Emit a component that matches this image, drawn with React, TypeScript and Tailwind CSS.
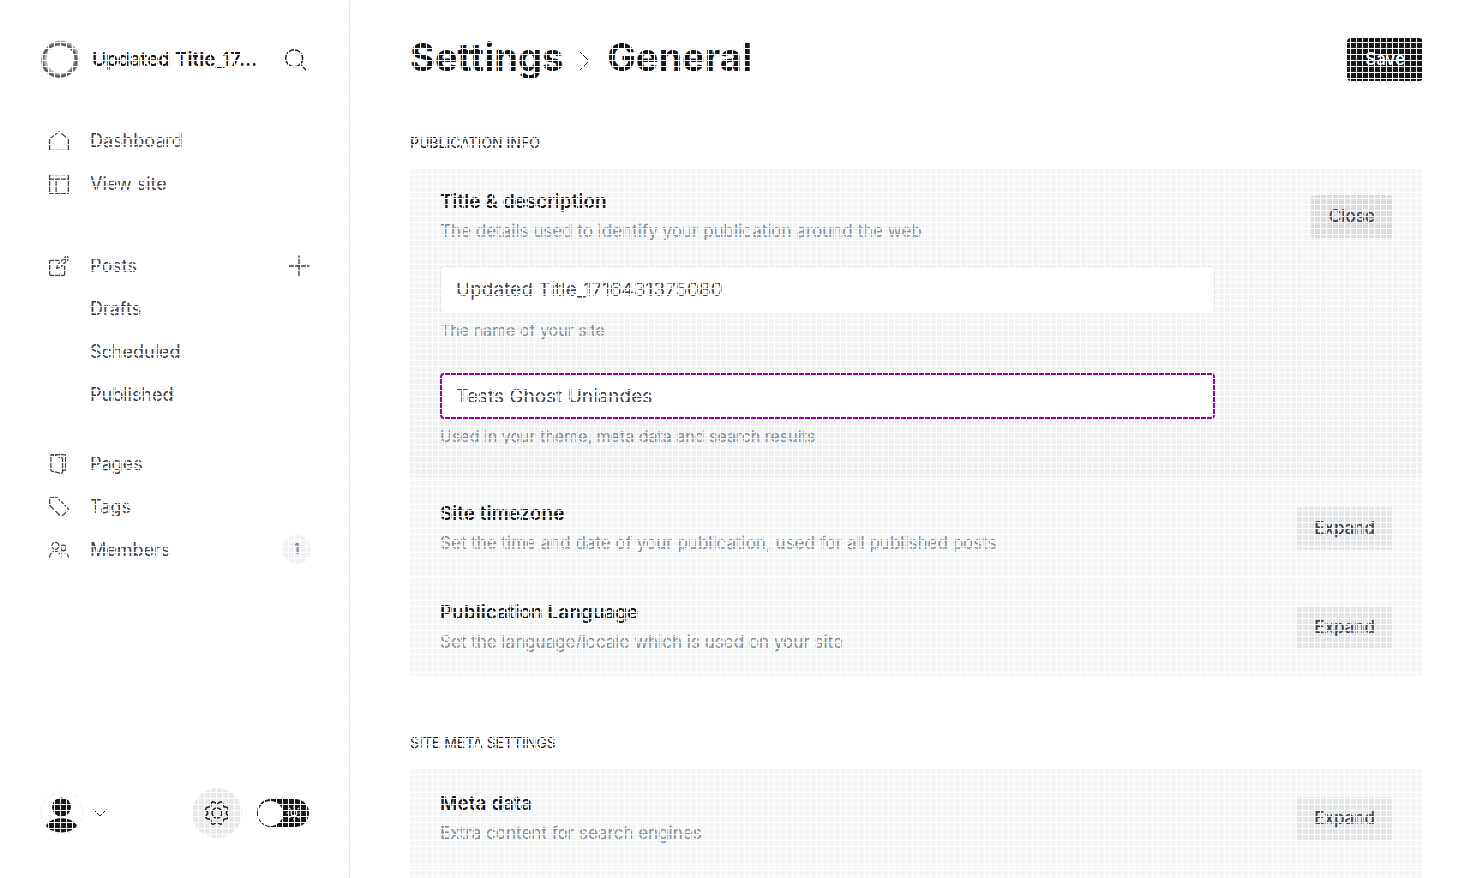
import React from "react";

type IconProps = { children: React.ReactNode; className?: string };

function Icon({ children, className = "size-5" }: IconProps) {
  return (
    <svg
      viewBox="0 0 24 24"
      fill="none"
      stroke="currentColor"
      strokeWidth="1.5"
      strokeLinecap="round"
      strokeLinejoin="round"
      aria-hidden="true"
      className={"shrink-0 overflow-visible " + className}
    >
      {children}
    </svg>
  );
}

const icons = {
  home: <path d="M.75 9.5 12 .75 23.25 9.5V23.25H.75z" />,
  site: <path d="M.75.75h22.5v22.5H.75zM.75 6h22.5M8.5 6v17.25" />,
  posts: (
    <path d="M12 5.25H2.25a1.5 1.5 0 0 0-1.5 1.5v15a1.5 1.5 0 0 0 1.5 1.5h15a1.5 1.5 0 0 0 1.5-1.5V12M22.6 1.4a2.2 2.2 0 0 0-3.1 0l-9 9-1.4 4.5 4.5-1.4 9-9a2.2 2.2 0 0 0 0-3.1zM18 3l3 3" />
  ),
  pages: (
    <path d="M3 .75h15.5a1.5 1.5 0 0 1 1.5 1.5V18a1.5 1.5 0 0 1-1.5 1.5h-2M3 .75a1.2 1.2 0 0 0-.75 1.1v17.3a1.5 1.5 0 0 0 1.1 1.45l11 2.6a1.5 1.5 0 0 0 1.9-1.5V6a1.5 1.5 0 0 0-1.1-1.4L3 .75z" />
  ),
  tags: (
    <path d="M.75 2.25a1.5 1.5 0 0 1 1.5-1.5h6.4a3 3 0 0 1 2.1.9L22.8 13.7a1.5 1.5 0 0 1 0 2.1l-7 7a1.5 1.5 0 0 1-2.1 0L1.65 10.75a3 3 0 0 1-.9-2.1z" />
  ),
  members: (
    <path d="M3.5 7a4.2 4.2 0 1 0 8.4 0 4.2 4.2 0 1 0-8.4 0zM14 9.5a3.3 3.3 0 1 0 6.6 0 3.3 3.3 0 1 0-6.6 0zM.75 20.5a6.75 6.75 0 0 1 13.5 0M14.5 15.8a5.7 5.7 0 0 1 8.75 4.7" />
  ),
};

// Closed outline of a cog with eight rounded lobes, in a 24-unit box.
const cogPoints = Array.from({ length: 96 }, (_, i) => {
  const angle = (i / 96) * 2 * Math.PI;
  const radius = 10.6 - 1.4 * Math.cos(8 * angle);
  return `${(12 + radius * Math.cos(angle)).toFixed(2)},${(12 + radius * Math.sin(angle)).toFixed(2)}`;
}).join(" ");

type NavItemProps = { label: string; icon?: React.ReactNode; children?: React.ReactNode };

function NavItem({ label, icon, children }: NavItemProps) {
  return (
    <li className="flex h-[43px] items-center pr-[38px] pl-[49px] text-[#394047]">
      <a href="#" className="flex grow items-center text-[18px]">
        <span className="flex w-[41px]">{icon && <Icon>{icon}</Icon>}</span>
        {label}
      </a>
      {children}
    </li>
  );
}

function Sidebar() {
  return (
    <aside className="flex w-[350px] shrink-0 flex-col border-r border-[#dfe1e3]">
      <header className="flex items-center pt-10 pr-[42px] pl-10">
        <svg viewBox="0 0 40 40" className="size-10 shrink-0" fill="none" aria-hidden="true">
          <ellipse cx="21" cy="19" rx="16.5" ry="16.5" stroke="#b5b5b5" strokeWidth="4" />
          <ellipse cx="19" cy="20" rx="16" ry="17" stroke="#8a8a8a" strokeWidth="3" transform="rotate(35 20 20)" />
          <ellipse cx="19.5" cy="20.5" rx="17" ry="16" stroke="#5a5a5a" strokeWidth="2" />
        </svg>
        <h2 className="ml-3 text-[19px] leading-6 font-semibold whitespace-nowrap text-[#15171a]">
          Updated Title_17...
        </h2>
        <button aria-label="Search" className="ml-auto text-[#15171a]">
          <Icon className="size-[22px]">
            <circle cx="10" cy="10" r="9.25" />
            <path d="m16.5 16.5 6.75 6.75" />
          </Icon>
        </button>
      </header>
      <nav className="mt-[39px] grow">
        <ul>
          <NavItem label="Dashboard" icon={icons.home} />
          <NavItem label="View site" icon={icons.site} />
        </ul>
        <ul className="mt-[39px]">
          <NavItem label="Posts" icon={icons.posts}>
            <button aria-label="New post">
              <Icon className="mr-px size-[22px]">
                <path d="M12 1v22M1 12h22" />
              </Icon>
            </button>
          </NavItem>
          <NavItem label="Drafts" />
          <NavItem label="Scheduled" />
          <NavItem label="Published" />
        </ul>
        <ul className="mt-[26px]">
          <NavItem label="Pages" icon={icons.pages} />
          <NavItem label="Tags" icon={icons.tags} />
          <NavItem label="Members" icon={icons.members}>
            <span className="flex size-[29px] items-center justify-center rounded-full bg-[#eff1f2] text-[15px] font-semibold text-[#7c8b9a]">
              1
            </span>
          </NavItem>
        </ul>
      </nav>
      <footer className="flex items-center pr-10 pb-10 pl-10">
        <button aria-label="Account" className="flex items-center">
          <svg viewBox="0 0 44 44" className="size-11" aria-hidden="true">
            <circle cx="22" cy="22" r="21" fill="#fff" stroke="#e6e9eb" />
            <circle cx="21.5" cy="16" r="9.5" fill="#15171a" />
            <path d="M6 35c4-10.5 27-10.5 31 0-7 8.5-24 8.5-31 0z" fill="#15171a" />
          </svg>
          <svg viewBox="0 0 14 8" className="ml-[9px] h-2 w-[14px]" fill="none" stroke="#15171a" aria-hidden="true">
            <path d="m.5 .5 6.5 6.5 6.5-6.5" />
          </svg>
        </button>
        <a href="#" aria-label="Settings" className="ml-auto flex size-[50px] items-center justify-center rounded-full bg-[#e6e9eb] text-[#15171a]">
          <Icon className="size-6">
            <circle cx="12" cy="12" r="5" />
            <polygon points={cogPoints} />
          </Icon>
        </a>
        <button role="switch" aria-checked="false" aria-label="Night mode" className="ml-[15px] flex h-7 w-[52px] items-center justify-between rounded-full bg-[#15171a] pr-2 pl-px text-white">
          <span className="size-[25px] rounded-full bg-white" />
          <Icon className="size-[14px] stroke-2">
            <circle cx="12" cy="12" r="5" />
            <path d="M12 0v3M12 21v3M0 12h3M21 12h3M3.5 3.5l2 2M18.5 18.5l2 2M3.5 20.5l2-2M18.5 5.5l2-2" />
          </Icon>
        </button>
      </footer>
    </aside>
  );
}

type SettingProps = {
  title: string;
  description: string;
  open?: boolean;
  children?: React.ReactNode;
};

function Setting({ title, description, open = false, children }: SettingProps) {
  return (
    <div
      className={
        open
          ? "bg-linear-to-b from-[#f4f6f6] to-[#efefef] px-[30px] pt-5 pb-[30px]"
          : "bg-[#f4f6f6] px-[30px] py-[22px]"
      }
    >
      <div className="flex items-center justify-between">
        <div>
          <h4 className="text-[19px] leading-[26px] font-semibold text-[#15171a]">{title}</h4>
          <p className="mt-1 text-[17px] leading-6 text-[#7c8b9a]">{description}</p>
        </div>
        <button
          aria-expanded={open}
          className={
            open
              ? "h-[43px] rounded bg-[#d9dbdd] px-[18px] pt-0.5 text-[17px] font-medium text-[#394047]"
              : "h-[43px] rounded bg-[#e3e6e9] px-[18px] pt-0.5 text-[17px] font-medium text-[#394047]"
          }
        >
          {open ? "Close" : "Expand"}
        </button>
      </div>
      {children}
    </div>
  );
}

type FieldProps = { id: string; value: string; help: string; focused?: boolean };

function Field({ id, value, help, focused = false }: FieldProps) {
  return (
    <div className="mr-[178px]">
      <input
        id={id}
        defaultValue={value}
        className={
          focused
            ? "block h-[46px] w-full rounded border-2 border-[#9a009f] bg-white px-[14px] text-[19px] text-[#394047] outline-none"
            : "block h-[47px] w-full rounded border border-[#e0e3e6] bg-white px-[15px] text-[19px] text-[#394047] outline-none"
        }
      />
      <label htmlFor={id} className="mt-[5px] block text-[16px] leading-6 text-[#7c8b9a]">
        {help}
      </label>
    </div>
  );
}

export default function App() {
  return (
    <div className="relative flex h-screen overflow-hidden bg-white font-['Inter',sans-serif]">
      <Sidebar />
      <main className="min-w-0 grow overflow-hidden px-[60px] pt-[37px]">
        <header className="flex h-11 items-start justify-between">
          <h1 className="flex items-center text-[38px] leading-10 font-bold text-[#15171a]">
            <a href="#">Settings</a>
            <svg viewBox="0 0 12 20" className="mx-4 mt-2 h-5 w-3" fill="none" stroke="currentColor" aria-hidden="true">
              <path d="m1 1 9 9-9 9" />
            </svg>
            General
          </h1>
          <button className="mt-px h-[43px] rounded bg-[#15171a] px-[18px] text-[17px] font-medium text-white">
            Save
          </button>
        </header>
        <section className="mt-[52px]">
          <h3 className="text-[14px] leading-5 text-[#15171a] uppercase">Publication info</h3>
          <div className="mt-4 flex flex-col gap-px overflow-hidden rounded">
            <Setting title="Title &amp; description" description="The details used to identify your publication around the web" open>
              <div className="mt-[23px] flex flex-col gap-[31px]">
                <Field id="site-title" value="Updated Title_1716431375080" help="The name of your site" />
                <Field id="site-description" value="Tests Ghost Uniandes" help="Used in your theme, meta data and search results" focused />
              </div>
            </Setting>
            <Setting title="Site timezone" description="Set the time and date of your publication, used for all published posts" />
            <Setting title="Publication Language" description="Set the language/locale which is used on your site" />
          </div>
        </section>
        <section className="mt-[57px]">
          <h3 className="text-[14px] leading-5 text-[#15171a] uppercase">Site meta settings</h3>
          <div className="mt-4 flex flex-col gap-px overflow-hidden rounded">
            <Setting title="Meta data" description="Extra content for search engines" />
            <div className="h-24 bg-[#f4f6f6]" />
          </div>
        </section>
      </main>
      <div
        aria-hidden="true"
        className="pointer-events-none absolute inset-0 bg-[linear-gradient(to_right,white_1px,transparent_1px),linear-gradient(to_bottom,white_1px,transparent_1px)] bg-[size:6px_6px]"
      />
    </div>
  );
}
